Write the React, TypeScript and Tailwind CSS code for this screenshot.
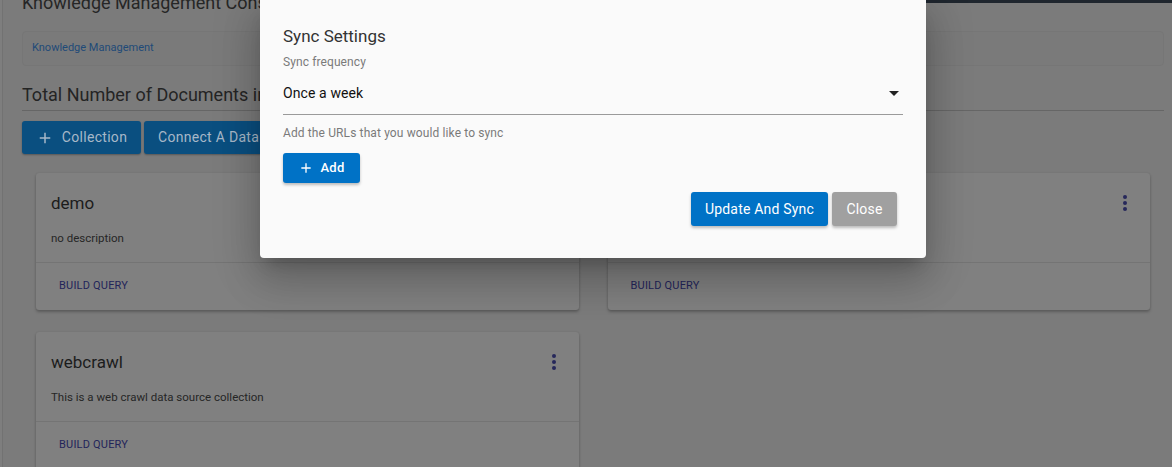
import React from "react";

const font = { fontFamily: "Roboto, 'Noto Sans', Arial, sans-serif" };

const Plus = ({ className }: { className?: string }) => (
  <svg viewBox="0 0 24 24" className={className} fill="currentColor">
    <path d="M19 13h-6v6h-2v-6H5v-2h6V5h2v6h6v2z" />
  </svg>
);

const Kebab = () => (
  <svg viewBox="0 0 24 24" className="w-6 h-6 text-[#26285a]" fill="currentColor">
    <circle cx="12" cy="6" r="2" />
    <circle cx="12" cy="12" r="2" />
    <circle cx="12" cy="18" r="2" />
  </svg>
);

interface Collection {
  name: string;
  description: string;
}

const collections: Collection[] = [
  { name: "demo", description: "no description" },
  { name: "sitemap", description: "no description" },
  { name: "webcrawl", description: "This is a web crawl data source collection" },
];

const CollectionCard: React.FC<{ item: Collection }> = ({ item }) => (
  <div className="bg-[#808080] rounded-[3px] shadow-[0_2px_3px_rgba(0,0,0,0.25),0_0_2px_rgba(0,0,0,0.1)]">
    <div className="px-[15px] pt-[18px] pb-[16px] border-b border-[#747474]">
      <div className="flex items-center justify-between">
        <h3 className="text-[17px] leading-[24px] text-[#1c1c1c]">{item.name}</h3>
        <span className="-mr-[2px]">
          <Kebab />
        </span>
      </div>
      <p className="mt-[15px] text-[11.5px] leading-[16px] text-[#262626]">{item.description}</p>
    </div>
    <div className="h-[47px] flex items-center px-[23px]">
      <span className="text-[11px] text-[#23245a] tracking-[0.2px]">BUILD QUERY</span>
    </div>
  </div>
);

export default function App() {
  return (
    <div className="relative w-[1172px] h-[467px] overflow-hidden bg-[#7b7b7b]" style={font}>
      {/* dimmed page behind the dialog */}
      <div className="h-full flex">
        <div className="w-[3px] bg-[#7e7e7e] border-r border-[#727272]" />
        <div className="flex-1 pl-[19px] pr-[8px] mt-[-8px]">
          <h1 className="text-[18px] leading-[22px] text-[#262626]">Knowledge Management Console</h1>

          <div className="mt-[17px] h-[35px] flex items-center px-[9px] rounded-[4px] bg-[#7a7a7a] border border-[#767676]">
            <span className="text-[11px] text-[#1f4a78]">Knowledge Management</span>
          </div>

          <div className="mt-[18px] pb-[4px] border-b border-[#666666]">
            <h2 className="text-[18px] leading-[22px] text-[#242424]">
              Total Number of Documents in Elasticsearch: 1423
            </h2>
          </div>

          <div className="mt-[10px] flex gap-[3px]">
            <button className="h-[33px] w-[119px] flex items-center justify-center gap-[8px] rounded-[3px] bg-[#0a4f80] text-[#a7b8c8] text-[14px] tracking-[0.3px] shadow-[0_1px_2px_rgba(0,0,0,0.3)]">
              <Plus className="w-[18px] h-[18px]" />
              Collection
            </button>
            <button className="h-[33px] px-[14px] flex items-center rounded-[3px] bg-[#0a4f80] text-[#a7b8c8] text-[14px] tracking-[0.3px] shadow-[0_1px_2px_rgba(0,0,0,0.3)]">
              Connect A Data Source
            </button>
          </div>

          <div className="mt-[19px] px-[14px] grid grid-cols-2 gap-x-[29px] gap-y-[22px]">
            {collections.map((c) => (
              <CollectionCard key={c.name} item={c} />
            ))}
          </div>
        </div>
      </div>

      {/* app bar edge peeking out at the top */}
      <div className="absolute top-0 right-0 w-[246px] h-[3px] bg-[#1f262e]" />

      {/* sync settings dialog */}
      <div className="absolute top-0 left-[260px] w-[666px] h-[258px] bg-[#fafafa] rounded-b-[4px] shadow-[0_11px_15px_-7px_rgba(0,0,0,0.2),0_24px_38px_3px_rgba(0,0,0,0.14),0_9px_46px_8px_rgba(0,0,0,0.12)] px-[23px] pt-[26px]">
        <h2 className="text-[17px] leading-[20px] text-[#333333]">Sync Settings</h2>
        <p className="mt-[8px] text-[12px] leading-[16px] text-[#7a7a7a] tracking-[0.1px]">Sync frequency</p>
        <div className="mt-[14px] h-[31px] flex items-start justify-between border-b border-[#9a9a9a]">
          <span className="text-[14px] leading-[18px] text-[#111111] tracking-[0.1px]">Once a week</span>
          <svg viewBox="0 0 24 24" className="w-6 h-6 -mt-[3px] -mr-[3px] text-[#222222]" fill="currentColor">
            <path d="M7 10l5 5 5-5z" />
          </svg>
        </div>
        <p className="mt-[10px] text-[12px] leading-[16px] text-[#7a7a7a] tracking-[0.12px]">
          Add the URLs that you would like to sync
        </p>
        <button className="mt-[12px] h-[30px] w-[77px] flex items-center justify-center gap-[6px] rounded-[3px] bg-[#0072c6] text-white text-[13px] font-medium tracking-[0.3px] shadow-[0_2px_3px_rgba(0,0,0,0.25)]">
          <Plus className="w-[16px] h-[16px]" />
          Add
        </button>
        <div className="mt-[9px] pr-[6px] flex justify-end gap-[4px]">
          <button className="h-[34px] w-[137px] rounded-[3px] bg-[#0072c6] text-white text-[14px] tracking-[0.2px] shadow-[0_2px_3px_rgba(0,0,0,0.25)]">
            Update And Sync
          </button>
          <button className="h-[34px] w-[65px] rounded-[3px] bg-[#a0a0a0] text-white text-[14px] tracking-[0.2px] shadow-[0_2px_3px_rgba(0,0,0,0.25)]">
            Close
          </button>
        </div>
      </div>
    </div>
  );
}
